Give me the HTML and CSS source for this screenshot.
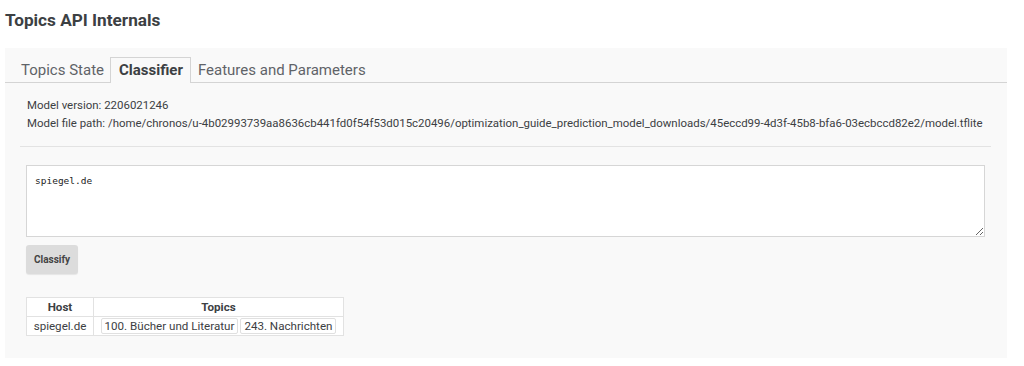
FILE: index.html
```html
<!DOCTYPE html>
<html lang="en">
<head>
  <meta charset="UTF-8">
  <title>Topics API Internals</title>
  <link rel="stylesheet" href="styles.css">
</head>
<body>
  <h1>Topics API Internals</h1>
  <div class="panel">
    <div class="tabs">
      <span class="tab">Topics State</span>
      <span class="tab active">Classifier</span>
      <span class="tab">Features and Parameters</span>
    </div>
    <div class="tab-body">
      <div class="model-info">
        <div>Model version: 2206021246</div>
        <div>Model file path: /home/chronos/u-4b02993739aa8636cb441fd0f54f53d015c20496/optimization_guide_prediction_model_downloads/45eccd99-4d3f-45b8-bfa6-03ecbccd82e2/model.tflite</div>
      </div>
      <hr>
      <div class="classify-form">
        <textarea>spiegel.de</textarea>
        <button class="classify-btn">Classify</button>
        <table class="results">
          <thead>
            <tr><th class="host">Host</th><th class="topics">Topics</th></tr>
          </thead>
          <tbody>
            <tr>
              <td>spiegel.de</td>
              <td><span class="topic">100. Bücher und Literatur</span><span class="topic">243. Nachrichten</span></td>
            </tr>
          </tbody>
        </table>
      </div>
    </div>
  </div>
</body>
</html>
```

FILE: styles.css
```css
* { box-sizing: border-box; }
body {
  margin: 0;
  padding: 0 5px;
  font-family: Roboto, 'Noto Sans', sans-serif;
  color: #333;
  background: #fff;
}
h1 {
  font-size: 17.2px;
  font-weight: bold;
  color: #3c4043;
  margin: 0;
  padding: 10px 0 0;
  height: 48px;
}
/* Panel */
.panel {
  width: 1002px;
  height: 310px;
  background: #f9f9f9;
}
.tabs {
  display: flex;
  padding: 9px 0 0 10px;
  border-bottom: 1px solid #d4d4d4;
  height: 35px;
}
.tab {
  font-size: 15px;
  color: #5f6368;
  padding: 3px 5px 0;
  height: 25px;
  border: 1px solid transparent;
  border-bottom: none;
  margin-bottom: -1px;
}
.tab.active {
  font-weight: bold;
  color: #3c4043;
  background: #f9f9f9;
  border-color: #d4d4d4;
  height: 26px;
  padding: 3px 7px 0 8px;
  margin-right: 1px;
}
.tab-body { padding: 13px 16px 0 15px; }
.model-info {
  font-size: 11.45px;
  line-height: 18px;
  color: #3c4043;
  padding-left: 7px;
  white-space: nowrap;
}
hr {
  border: none;
  border-top: 1px solid #e3e3e3;
  margin: 14px 0 18px;
}
.classify-form { padding-left: 6px; }
textarea {
  display: block;
  width: 959px;
  height: 72px;
  border: 1px solid #d6d6d6;
  background: #fff;
  font-family: 'DejaVu Sans Mono', monospace;
  font-size: 9.5px;
  color: #222;
  padding: 9px 8px;
  margin: 0;
}
.classify-btn {
  display: block;
  margin-top: 8px;
  width: 52px;
  height: 29px;
  border: none;
  border-radius: 3px;
  background: #dcdcdc;
  font-family: Roboto, sans-serif;
  font-size: 10px;
  font-weight: bold;
  color: #444;
  box-shadow: 0 1px 1px rgba(0,0,0,0.08);
}
/* Results table */
.results {
  margin-top: 23px;
  border-collapse: collapse;
  font-size: 11.6px;
  color: #3c4043;
  background: #fff;
  white-space: nowrap;
}
.results th, .results td {
  border: 1px solid #e2e2e2;
  padding: 1px 4px;
  height: 19px;
  text-align: center;
}
.results th.host { width: 67px; }
.results th.topics { width: 250px; }
.topic {
  display: inline-block;
  border: 1px solid #e0e0e0;
  border-radius: 2px;
  padding: 0 3px;
  margin: 0 1px;
  line-height: 14px;
}
```
